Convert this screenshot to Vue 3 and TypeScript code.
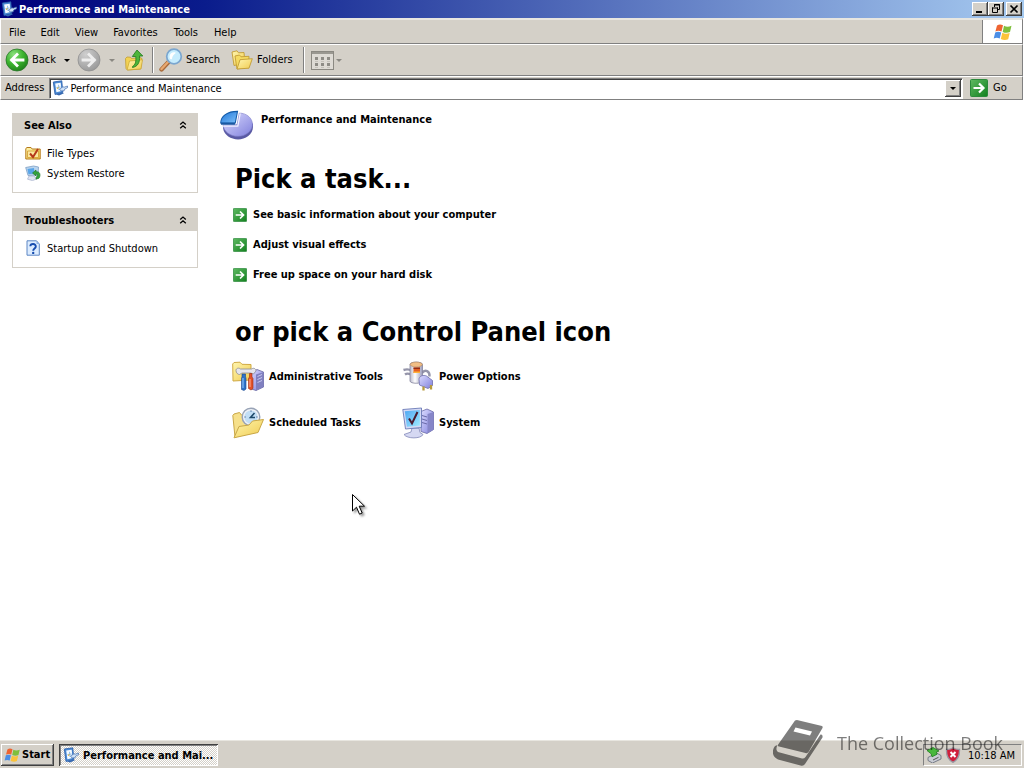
<script setup lang="ts">
interface Item {
  label: string
  icon: string
}

interface Panel {
  title: string
  links: Item[]
}

const title = 'Performance and Maintenance'
const menus: string[] = ['File', 'Edit', 'View', 'Favorites', 'Tools', 'Help']
const panels: Panel[] = [
  {
    title: 'See Also',
    links: [
      { label: 'File Types', icon: 'i-filetypes' },
      { label: 'System Restore', icon: 'i-restore' },
    ],
  },
  { title: 'Troubleshooters', links: [{ label: 'Startup and Shutdown', icon: 'i-help' }] },
]
const tasks: string[] = [
  'See basic information about your computer',
  'Adjust visual effects',
  'Free up space on your hard disk',
]
const applets: Item[] = [
  { label: 'Administrative Tools', icon: 'i-admin' },
  { label: 'Power Options', icon: 'i-power' },
  { label: 'Scheduled Tasks', icon: 'i-sched' },
  { label: 'System', icon: 'i-system' },
]
</script>

<template>
  <div class="desktop">
    <svg class="sprite" aria-hidden="true">
      <defs>
        <radialGradient id="g-green" cx=".35" cy=".25" r=".85">
          <stop offset="0" stop-color="#8be07c" />
          <stop offset=".5" stop-color="#3cb32e" />
          <stop offset="1" stop-color="#1c7a18" />
        </radialGradient>
        <radialGradient id="g-grey" cx=".35" cy=".25" r=".85">
          <stop offset="0" stop-color="#cfcfcf" />
          <stop offset="1" stop-color="#959595" />
        </radialGradient>
        <linearGradient id="g-go" x1="0" y1="0" x2="1" y2="1">
          <stop offset="0" stop-color="#5fba62" />
          <stop offset="1" stop-color="#12801f" />
        </linearGradient>
        <linearGradient id="g-folder" x1="0" y1="0" x2="1" y2="1">
          <stop offset="0" stop-color="#fff6b0" />
          <stop offset="1" stop-color="#f0cb50" />
        </linearGradient>
        <linearGradient id="g-lilac" x1="0" y1="0" x2="1" y2="1">
          <stop offset="0" stop-color="#dcdcff" />
          <stop offset="1" stop-color="#8080dc" />
        </linearGradient>
        <linearGradient id="g-blue" x1="0" y1="0" x2="1" y2="1">
          <stop offset="0" stop-color="#1c74d8" />
          <stop offset="1" stop-color="#7fc0f8" />
        </linearGradient>
        <linearGradient id="g-screen" x1="0" y1="0" x2="1" y2="1">
          <stop offset="0" stop-color="#4fa6f2" />
          <stop offset="1" stop-color="#9eeaff" />
        </linearGradient>
        <linearGradient id="g-can" x1="0" y1="0" x2="1" y2="0">
          <stop offset="0" stop-color="#b9b9cc" />
          <stop offset=".4" stop-color="#ffffff" />
          <stop offset="1" stop-color="#9a9ab8" />
        </linearGradient>
      </defs>

      <symbol id="i-window" viewBox="0 0 16 16">
        <path d="M1.300 2 9.800.8 10.800 12.500 3 14.500z" fill="#4a8ad4" stroke="#2a5ca8" stroke-width=".8" />
        <path d="M3.200 3.600 8.700 2.800 9.500 11 4.400 12.200z" fill="#f6fbff" />
        <path d="M4.500 7.500l4-.5M6.500 4.800l.4 5" stroke="#8fbde8" />
        <path d="M5 9l1.500-2" stroke="#e4b43a" />
        <path d="M4 14.600 10 12.500l2 .8-5 2.200z" fill="#3568b0" />
        <path d="M7.500 9 11 6.800l1.200.4L15.500 6v1.700L12.800 9l-.7 1.800L9 11z" fill="#cfe2f7" stroke="#446fae" stroke-width=".7" />
      </symbol>

      <symbol id="i-flag" viewBox="0 0 20 18">
        <path d="M4 2.500C6 1 8 1.200 10 2.200L8.500 8.500C6.500 7.500 4.500 7.400 2.400 8.500z" fill="#ee6432" />
        <path d="M11 2.700C13.500 4 15.500 4 18.500 2.700L17 9c-2.500 1.200-5 1-7.300-.1z" fill="#7fbf3c" />
        <path d="M2.200 9.400C4.200 8.300 6.200 8.500 8.200 9.400L6.700 15.500C4.700 14.500 2.700 14.500.7 15.500z" fill="#4b8ee6" />
        <path d="M9.300 9.800C11.700 11 14.200 11 16.700 9.900l-1.500 6.300c-2.500 1.100-5 .9-7.400-.2z" fill="#fbc33a" />
      </symbol>

      <symbol id="i-back" viewBox="0 0 24 24">
        <circle cx="12" cy="12" r="11" fill="url(#g-green)" stroke="#29762a" stroke-width=".8" />
        <path d="M18 12H7M12 6.500 6.500 12l5.500 5.500" fill="none" stroke="#fff" stroke-width="2.800" stroke-linecap="square" />
      </symbol>

      <symbol id="i-fwd" viewBox="0 0 24 24">
        <circle cx="12" cy="12" r="11" fill="url(#g-grey)" stroke="#8f8f8f" stroke-width=".8" />
        <path d="M6 12h11M12 6.500l5.500 5.500-5.500 5.500" fill="none" stroke="#eee" stroke-width="2.800" stroke-linecap="square" />
      </symbol>

      <symbol id="i-up" viewBox="0 0 20 22">
        <path d="M1.500 9.500 3 8l3.500.2 1 1.300L16 8.500l2 1-1.500 10.500L3.500 21 2 19.500z" fill="#f2d254" stroke="#c09c34" stroke-width=".8" />
        <path d="M3 21 5.500 12l13-1.200L17 20z" fill="url(#g-folder)" stroke="#c7a12f" stroke-width=".7" />
        <path d="M8.500 17.500c3-1.500 3.800-5 3.300-10H8.300L13 1l5.800 6h-3.300c.6 6.500-1.700 10.500-7 11.500z" fill="#4db53a" stroke="#1f7a1c" stroke-width=".8" />
      </symbol>

      <symbol id="i-search" viewBox="0 0 24 24">
        <path d="M2.500 21.500 9.500 14" stroke="#a86a3a" stroke-width="4.400" stroke-linecap="round" />
        <path d="M2.500 21 9.500 13.500" stroke="#e8a870" stroke-width="2.400" stroke-linecap="round" />
        <circle cx="15" cy="8.500" r="7.300" fill="#c6ecfd" stroke="#7ba6cf" stroke-width="1.700" />
        <path d="M10.500 9c0-3.500 3-5.500 6-4.500 1 1.200-3 1.500-3.500 6.500-1.500 1-2.500-.5-2.500-2z" fill="#fff" />
      </symbol>

      <symbol id="i-folders" viewBox="0 0 22 20">
        <path d="M1 2 6 .8l1.500 2L13 2.500 14 13 3 15.500z" fill="url(#g-folder)" stroke="#c29c34" stroke-width=".9" />
        <path d="M4 6l4.500-1 1.500 1.800 8-.5-.5 11L6 19z" fill="#f5db62" stroke="#c29c34" stroke-width=".9" />
        <path d="M6 19 9 9.700l12.300-1-3.300 9.500z" fill="url(#g-folder)" stroke="#c29c34" stroke-width=".9" />
      </symbol>

      <symbol id="i-views" viewBox="0 0 23 19">
        <rect x=".5" y=".5" width="22" height="18" fill="#dedbd5" stroke="#8b8982" />
        <path d="M1 2h21" stroke="#9a9891" stroke-width="2" />
        <path d="M4 6h3v3H4zM10 6h3v3h-3zM16 6h3v3h-3zM4 12h3v3H4zM10 12h3v3h-3zM16 12h3v3h-3z" fill="#8e8c86" />
        <path d="M4 10.500h3M10 10.500h3M16 10.500h3M4 16.500h3M10 16.500h3M16 16.500h3" stroke="#c4c1ba" />
      </symbol>

      <symbol id="i-go" viewBox="0 0 18 18">
        <rect x=".5" y=".5" width="17" height="17" rx="1" fill="url(#g-go)" stroke="#2c8a3c" />
        <path d="M3.500 9H13M9 4.500 13.500 9 9 13.500" fill="none" stroke="#fff" stroke-width="2.200" />
      </symbol>

      <symbol id="i-chev" viewBox="0 0 8 8">
        <path d="M1.200 3.500 4 1l2.800 2.500M1.200 7.300 4 4.800l2.800 2.500" fill="none" stroke="#000" stroke-width="1.300" />
      </symbol>

      <symbol id="i-filetypes" viewBox="0 0 16 16">
        <path d="M.8 3.500 2 2.500h4l1.200 1.500h8V14H.8z" fill="url(#g-folder)" stroke="#b57a1c" />
        <path d="M2.500 6h11v6.500h-11z" fill="#fbe9a0" stroke="#d39a30" stroke-width=".8" />
        <path d="M5 8.500 8 12l5-8" fill="none" stroke="#b5381a" stroke-width="2" />
      </symbol>

      <symbol id="i-restore" viewBox="0 0 16 16">
        <path d="M.7 2.500 8.500 1 13.500 2 13 10 3 10.500z" fill="#b9d4ee" stroke="#7f9fc4" stroke-width=".8" />
        <path d="M2.500 4 9 3l.5 5.500-6 .7z" fill="#58a5e8" />
        <path d="M4 11h5l2.500 3L7.500 15.600 2.500 14.200z" fill="#dfe4f2" stroke="#a5b0cb" stroke-width=".7" />
        <path d="M7.500 8 11 5v1.700c4-.5 5 3.500 3 6.500l-3 1 .3-2.200c2-2 1.200-3-.3-3V11z" fill="#35a53b" stroke="#176f21" stroke-width=".6" />
      </symbol>

      <symbol id="i-help" viewBox="0 0 16 16">
        <path d="M2 .8h9.500L14.300 4v11.200H2z" fill="#dcecff" stroke="#5d86c4" />
        <path d="M11.500.8V4h2.800z" fill="#8fb3e4" />
        <path d="M5.300 6.300C5.500 3.200 11 3.300 10.800 6.500c0 2-2.600 2-2.600 4.200" fill="none" stroke="#164caf" stroke-width="1.900" />
        <circle cx="8.200" cy="12.900" r="1.200" fill="#164caf" />
      </symbol>

      <symbol id="i-pie" viewBox="0 0 32 30">
        <path d="M3 15v3c1 6.500 7.500 10.500 14.500 10.500S32 24 32 16v-3z" fill="#5a5aa4" />
        <path d="M3 14.500H16.500L18.700 3C26 3 31.500 8 31.500 14S25 25.500 17.500 25.500 3.500 21 3 14.500z" fill="url(#g-lilac)" stroke="#7c7cc8" stroke-width=".6" />
        <path d="M3 15.600h14.300L19.600 3.200" fill="none" stroke="#f0f0ff" stroke-width="1.200" />
        <path d="M.7 12.500C.7 6 7 1.300 17 1.300l-2.200 11.200z" fill="url(#g-blue)" stroke="#125aa8" />
        <path d="M.7 12.300h14l-.3 2H1z" fill="#1a58a2" />
      </symbol>

      <symbol id="i-admin" viewBox="0 0 32 32">
        <path d="M.7 3 2 1.500l6-.3L10 3.300l9 .2V19L1 20z" fill="url(#g-folder)" stroke="#d0aa45" />
        <path d="M19 11.500 25 8.500l6.500 2.500V26L24 29.500l-6-2z" fill="url(#g-lilac)" stroke="#66669f" stroke-width=".8" />
        <path d="M24 13.500v16l7.500-3.500V11z" fill="#8080c0" />
        <path d="M25.500 15.500l4.500-2M25.500 18.500l4.500-2M25.500 21.500l4.500-2" stroke="#c8c8f0" />
        <path d="M4 9.500C4 7 7 6.500 8.500 8h11c2-1.500 4.500-.5 4.500 2l-2.500 3-3-1H10l-2.500 1.500C6 13.500 4 12 4 9.500z" fill="#e6e6ec" stroke="#8a8a98" stroke-width=".8" />
        <path d="M10 13h3.500v3l.5 1v11l-2 1.500-2.500-1V17l.5-1z" fill="#2d72c8" stroke="#17458d" stroke-width=".6" />
        <path d="M11 17v10" stroke="#9acbff" />
        <path d="M17.500 12.500H20V16l1 1.500v10L19 29l-2.500-1.500v-10l1-1.500z" fill="#e2522a" stroke="#9d2b12" stroke-width=".6" />
        <path d="M18 18v8" stroke="#ffb296" />
      </symbol>

      <symbol id="i-power" viewBox="0 0 32 32">
        <path d="M10 10C6.500 7.500 4.500 8 1.500 9M11 14.500C7 12 5 12 3 13.500M20 12c3-4 8-2 7.500 3.500" fill="none" stroke="#9595aa" stroke-width="2.400" />
        <path d="M8 3.500C8 .3 20.500.3 20.500 3.500V20c0 3-12.500 3-12.500 0z" fill="url(#g-can)" stroke="#85859e" stroke-width=".8" />
        <ellipse cx="14.200" cy="3.500" rx="6" ry="2.400" fill="#f1be85" stroke="#b4865a" stroke-width=".6" />
        <path d="M11.500 6.500h6.500V12h-6.500z" fill="#e46024" />
        <path d="M11.500 6.500h6.500V8h-6.500z" fill="#932c15" />
        <path d="M11.500 10.500h6.500V12h-6.500z" fill="#ffb33b" />
        <path d="M17 18.500c0-3.500 4.500-5 7.500-3.500l6 4.500v5L26 27.500 17.500 24z" fill="url(#g-lilac)" stroke="#6e6eac" stroke-width=".8" />
        <path d="M21.500 25.500v4M29 24v4.500" stroke="#b79b3e" stroke-width="2.300" />
      </symbol>

      <symbol id="i-sched" viewBox="0 0 32 32">
        <path d="M.8 8.500 2 7l5.500-1.500 2 2.500L24 7v18L3 30z" fill="#f6e08a" stroke="#c9a747" />
        <circle cx="19" cy="10" r="8.800" fill="#eef1f7" stroke="#98a3b6" stroke-width="1.400" />
        <circle cx="19" cy="10" r="6.600" fill="#c2def5" />
        <path d="M22.500 6 18.500 10.500H23" fill="none" stroke="#1e4a6b" stroke-width="1.600" />
        <path d="M19 3.500v1.200M12.500 10h1.200M25.500 10h-1.200" stroke="#41608f" />
        <path d="M2 30.800 7 19.500l10-1.500 3.500-4 11-1.500-5.500 13z" fill="url(#g-folder)" stroke="#c9a747" />
      </symbol>

      <symbol id="i-system" viewBox="0 0 32 32">
        <path d="M19 4.500 25 2l6.500 3v17.500L25 26.500l-6-2z" fill="url(#g-lilac)" stroke="#6868a4" stroke-width=".8" />
        <path d="M25.500 7v19.300l6-3.800V5z" fill="#8686c8" />
        <path d="M20 8.500l5 1.500M20 12l5 1.500M20 15.500l5 1.500" stroke="#6a6aa8" />
        <path d="M10 21h7l1 4.500 3 2c-2 4.500-16 4.500-19 0l7-2.500z" fill="#d5d8f2" stroke="#8288b7" stroke-width=".8" />
        <path d="M.8 2.500 19.500 1v19.500L3.500 22z" fill="#d4daf5" stroke="#6b7bb7" stroke-width=".9" />
        <path d="M2.800 4.300 17.800 3v15.600L4.900 19.800z" fill="url(#g-screen)" />
        <path d="M7 11.500l3 5L15.500 5" fill="none" stroke="#4a1b30" stroke-width="2" />
      </symbol>

      <symbol id="i-eject" viewBox="0 0 16 16">
        <path d="M2 10.500 10.500 6 15 8.500V12l-8.500 4L2 13.500z" fill="#c9ccd4" stroke="#6e7480" stroke-width=".9" />
        <path d="M7 13l5.500-2.700" stroke="#555" />
        <path d="M1 3.500 7 .5l6 3.500-2.500.8.500 2.500-5 2.500-.8-3z" fill="#48b83d" stroke="#1c7c1c" stroke-width=".8" />
      </symbol>

      <symbol id="i-shield" viewBox="0 0 16 16">
        <path d="M8 .7C10 2 12.500 2.500 14.500 2.300c.3 6-1.500 10.500-6.500 13-5-2.500-6.800-7-6.500-13C3.500 2.500 6 2 8 .7z" fill="#d01f3c" stroke="#989aa4" stroke-width="1.300" />
        <path d="M5.500 5 10.500 10M10.500 5 5.500 10" stroke="#fff" stroke-width="2" />
      </symbol>
    </svg>

    <header class="titlebar">
      <svg class="ic16"><use href="#i-window" /></svg>
      <h1>{{ title }}</h1>
      <button class="cap" aria-label="Minimize">
        <svg viewBox="0 0 12 10"><path d="M2 8h6" stroke="#000" stroke-width="2" /></svg>
      </button>
      <button class="cap" aria-label="Restore">
        <svg viewBox="0 0 12 10">
          <path d="M4.500 3V.5h5v5H8M4 1h6M2 4h6M2.500 3.500v5h5v-5" fill="none" stroke="#000" />
        </svg>
      </button>
      <button class="cap close" aria-label="Close">
        <svg viewBox="0 0 12 10"><path d="M2.500 1.500l7 7M9.500 1.500l-7 7" stroke="#000" stroke-width="1.700" /></svg>
      </button>
    </header>

    <nav class="menubar">
      <button v-for="m in menus" :key="m">{{ m }}</button>
      <span class="brand"><svg><use href="#i-flag" /></svg></span>
    </nav>

    <div class="toolbar">
      <button class="tool"><svg class="ic24"><use href="#i-back" /></svg>Back</button>
      <button class="drop" aria-label="Back history"><i></i></button>
      <button class="tool" aria-label="Forward"><svg class="ic24"><use href="#i-fwd" /></svg></button>
      <button class="drop off" aria-label="Forward history"><i></i></button>
      <button class="tool up" aria-label="Up"><svg><use href="#i-up" /></svg></button>
      <span class="sep"></span>
      <button class="tool"><svg class="ic24"><use href="#i-search" /></svg>Search</button>
      <button class="tool folders"><svg><use href="#i-folders" /></svg>Folders</button>
      <span class="sep last"></span>
      <button class="tool views" aria-label="Views"><svg><use href="#i-views" /></svg></button>
      <button class="drop off" aria-label="View options"><i></i></button>
    </div>

    <form class="addressbar" @submit.prevent>
      <label for="address">Address</label>
      <div class="field">
        <svg class="ic16"><use href="#i-window" /></svg>
        <input id="address" type="text" :value="title" />
        <button type="button" class="combo" aria-label="Show addresses"><i></i></button>
      </div>
      <button class="go"><svg><use href="#i-go" /></svg>Go</button>
    </form>

    <div class="content">
      <aside>
        <section v-for="p in panels" :key="p.title" class="panel">
          <header>
            <h2>{{ p.title }}</h2>
            <button :aria-label="'Collapse ' + p.title"><svg><use href="#i-chev" /></svg></button>
          </header>
          <ul>
            <li v-for="l in p.links" :key="l.label">
              <a href="#"><svg class="ic16"><use :href="'#' + l.icon" /></svg><span>{{ l.label }}</span></a>
            </li>
          </ul>
        </section>
      </aside>

      <main>
        <div class="category">
          <svg><use href="#i-pie" /></svg>
          <span>{{ title }}</span>
        </div>
        <h2>Pick a task...</h2>
        <ul class="tasks">
          <li v-for="t in tasks" :key="t">
            <a href="#"><svg><use href="#i-go" /></svg>{{ t }}</a>
          </li>
        </ul>
        <h2>or pick a Control Panel icon</h2>
        <ul class="applets">
          <li v-for="a in applets" :key="a.label">
            <a href="#"><svg><use :href="'#' + a.icon" /></svg><span>{{ a.label }}</span></a>
          </li>
        </ul>
      </main>
    </div>

    <footer class="taskbar">
      <button class="start"><svg><use href="#i-flag" /></svg>Start</button>
      <button class="window"><svg class="ic16"><use href="#i-window" /></svg><span>Performance and Mai...</span></button>
      <div class="tray">
        <svg class="ic16"><use href="#i-eject" /></svg>
        <svg class="ic16"><use href="#i-shield" /></svg>
        <time>10:18 AM</time>
      </div>
    </footer>

    <div class="watermark">
      <svg viewBox="0 0 50 46">
        <path fill-rule="evenodd" d="M22 .5Q23.500-.2 25 .2L49 6Q50 6.500 49.500 8L35.500 32Q34.500 33.500 32.500 33L6 26.500Q4 26 5.500 24zM22.500 7.500 20.500 11.500 37 15.500 39 11.500z" />
        <path d="M4.500 25C3 28 3 30.500 5 32L29 38.500Q31 39 32.500 37L47.500 14.500Q50 14 49.500 17.500L32 44Q30.500 46.500 27.500 45.500L5 39.500C-1 37-1.500 30.500 2 26z" />
      </svg>
      <span>The Collection Book</span>
    </div>

    <svg class="pointer" viewBox="0 0 14 22">
      <path d="M.5.500v16.500l4-3.800 3 7 2.700-1.200-3-6.800h5.300z" fill="#fff" stroke="#000" />
    </svg>
  </div>
</template>

<style>
html,
body {
  margin: 0;
  background: #fff;
}
</style>

<style scoped>
.desktop {
  position: relative;
  display: flex;
  flex-direction: column;
  min-height: 100vh;
  overflow: hidden;
  background: #fff;
  color: #000;
  font: 11px/14px "DejaVu Sans Condensed", Tahoma, "DejaVu Sans", sans-serif;
}
.sprite {
  position: absolute;
  width: 0;
  height: 0;
}
svg {
  display: block;
  flex: none;
}
button,
input {
  margin: 0;
  padding: 0;
  border: 0;
  background: none;
  color: inherit;
  font: inherit;
}
h1,
h2,
ul {
  margin: 0;
  padding: 0;
  list-style: none;
}
a {
  color: inherit;
  text-decoration: none;
}
.ic16 {
  width: 16px;
  height: 16px;
}
.ic24 {
  width: 24px;
  height: 24px;
}

.titlebar {
  display: flex;
  align-items: center;
  height: 18px;
  padding: 0 2px 0 1px;
  background: linear-gradient(90deg, #00007b, #0a1c8c 20%, #a6caf0);
  color: #fff;
}
.titlebar h1 {
  flex: 1;
  margin-left: 2px;
  padding-top: 1px;
  font-size: 11px;
}
.cap {
  display: grid;
  place-items: center;
  width: 16px;
  height: 14px;
  background: #d4d0c8;
  box-shadow: inset -1px -1px #404040, inset 1px 1px #fff, inset -2px -2px #808080;
}
.cap svg {
  width: 12px;
  height: 10px;
}
.cap.close {
  margin-left: 2px;
}

.menubar,
.toolbar,
.addressbar {
  display: flex;
  align-items: center;
  box-sizing: border-box;
  margin-right: 1px;
  background: #d4d0c8;
  border-left: 1px solid #fff;
  border-right: 1px solid #808080;
}
.menubar {
  height: 26px;
  padding-left: 1px;
  border-top: 2px solid #e8e6e0;
  border-bottom: 1px solid #808080;
}
.menubar button {
  padding: 2px 8px 0 7px;
}
.menubar button:nth-child(n + 4) {
  padding-right: 9px;
}
.brand {
  display: grid;
  place-items: center;
  align-self: stretch;
  width: 39px;
  margin-left: auto;
  background: #fff;
  border-left: 1px solid #808080;
}
.brand svg {
  width: 20px;
  height: 18px;
}

.toolbar {
  height: 32px;
  padding-left: 4px;
  border-top: 1px solid #fff;
  border-bottom: 1px solid #808080;
}
.tool {
  display: flex;
  align-items: center;
  gap: 3px;
}
.drop {
  display: grid;
  place-items: center;
  width: 21px;
  height: 24px;
}
i {
  display: block;
  border: 3px solid transparent;
  border-top-color: #000;
  border-bottom-width: 0;
}
.off i {
  border-top-color: #8a8882;
}
.up {
  margin-left: 2px;
}
.up svg {
  width: 20px;
  height: 22px;
}
.sep {
  width: 1px;
  height: 26px;
  margin: 0 5px 0 8px;
  background: #808080;
  border-right: 1px solid #fff;
}
.sep.last {
  margin: 0 6px 0 10px;
}
.folders {
  margin-left: 11px;
  gap: 4px;
}
.folders svg {
  width: 22px;
  height: 20px;
}
.views svg {
  width: 23px;
  height: 19px;
}
.views + .drop {
  width: 11px;
}

.addressbar {
  height: 24px;
  padding-left: 4px;
  border-top: 1px solid #fff;
  border-bottom: 1px solid #808080;
}
.field {
  display: flex;
  flex: 1;
  align-items: center;
  box-sizing: border-box;
  height: 21px;
  margin-left: 5px;
  padding: 2px 1px 2px 2px;
  background: #fff;
  border: 1px solid #808080;
  border-right-color: #fff;
  border-bottom-color: #fff;
  box-shadow: inset 1px 1px #404040;
}
.field input {
  flex: 1;
  min-width: 0;
  margin-left: 2px;
  padding-top: 2px;
  outline: 0;
}
.combo {
  display: grid;
  place-items: center;
  width: 16px;
  height: 17px;
  background: #d4d0c8;
  box-shadow: inset -1px -1px #404040, inset 1px 1px #fff, inset -2px -2px #808080;
}
.go {
  display: flex;
  align-items: center;
  gap: 5px;
  width: 52px;
  margin-left: 7px;
}
.go svg {
  width: 18px;
  height: 18px;
}

.content {
  display: flex;
  flex: 1;
}
aside {
  display: flex;
  flex-direction: column;
  gap: 15px;
  width: 186px;
  padding: 13px 12px;
}
.panel {
  border: 1px solid #d4d0c8;
}
.panel header {
  display: flex;
  align-items: center;
  justify-content: space-between;
  height: 22px;
  padding: 1px 10px 0 11px;
  margin-top: -1px;
  background: #d4d0c8;
}
.panel h2 {
  padding-top: 2px;
  font-size: 11px;
}
.panel header svg {
  width: 8px;
  height: 8px;
}
.panel ul {
  padding: 7px 12px 9px;
}
.panel a {
  display: flex;
  align-items: center;
  gap: 6px;
  height: 20px;
}
.panel a span {
  padding-top: 1px;
}

main {
  flex: 1;
  padding: 10px 10px 20px;
}
.category {
  display: flex;
  align-items: flex-start;
  gap: 8px;
  font-weight: bold;
}
.category svg {
  width: 33px;
  height: 31px;
}
.category span {
  margin-top: 3px;
}
main h2 {
  margin: 20px 0 0 15px;
  font-size: 27px;
  line-height: 36px;
}
.tasks {
  padding: 3px 0 0 13px;
  font-weight: bold;
}
.tasks a {
  display: flex;
  align-items: center;
  gap: 6px;
  height: 30px;
}
.tasks svg {
  width: 14px;
  height: 14px;
}
.tasks + h2 {
  margin-top: 24px;
}
.applets {
  display: grid;
  grid-template-columns: 170px 170px;
  grid-auto-rows: 46px;
  padding: 4px 0 0 12px;
  font-weight: bold;
}
.applets a {
  display: flex;
  align-items: center;
  gap: 5px;
  height: 46px;
}
.applets svg {
  width: 32px;
  height: 32px;
}

.taskbar {
  display: flex;
  align-items: center;
  box-sizing: border-box;
  height: 28px;
  padding: 2px 2px 1px 1px;
  background: #d4d0c8;
  border-top: 1px solid #e8e6e0;
  font-weight: bold;
}
.start,
.window {
  display: flex;
  align-items: center;
  height: 22px;
}
.start {
  gap: 1px;
  width: 53px;
  padding-left: 3px;
  box-shadow: inset -1px -1px #404040, inset 1px 1px #fff, inset -2px -2px #808080;
}
.start svg {
  width: 17px;
  height: 16px;
}
.window {
  gap: 4px;
  width: 159px;
  margin-left: 5px;
  padding-left: 4px;
  background: repeating-conic-gradient(#fff 0 25%, #d4d0c8 0 50%) 0 0 / 2px 2px;
  box-shadow: inset 1px 1px #404040, inset -1px -1px #fff, inset 2px 2px #808080;
}
.window span {
  padding-top: 2px;
}
.tray {
  display: flex;
  align-items: center;
  gap: 3px;
  box-sizing: border-box;
  height: 22px;
  margin-left: auto;
  padding: 0 6px 0 2px;
  border: 1px solid #808080;
  border-right-color: #fff;
  border-bottom-color: #fff;
  font-weight: normal;
}
.tray time {
  margin-left: 4px;
  padding-top: 1px;
}

.watermark {
  position: absolute;
  right: 21px;
  bottom: 2px;
  display: flex;
  align-items: center;
  gap: 14px;
  color: #000;
  font: 18px/24px "Open Sans", "Noto Sans", sans-serif;
  opacity: 0.5;
  pointer-events: none;
}
.watermark svg {
  width: 50px;
  height: 46px;
}
.pointer {
  position: absolute;
  left: 352px;
  top: 494px;
  width: 14px;
  height: 22px;
  filter: drop-shadow(2px 2px 1px rgba(0, 0, 0, 0.4));
}
</style>
